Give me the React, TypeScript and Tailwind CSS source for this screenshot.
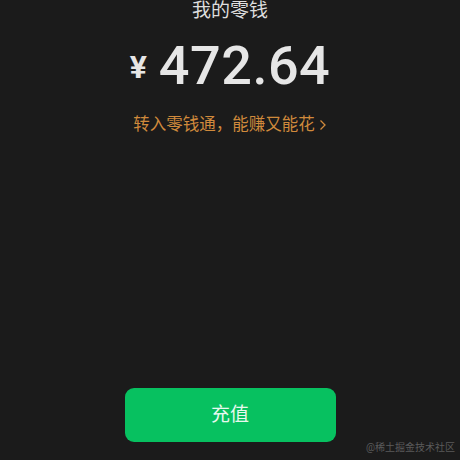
import React from "react";

const font = { fontFamily: '"Roboto", "Noto Sans CJK SC", sans-serif' };

export default function App() {
  return (
    <div
      className="relative w-[460px] h-[460px] overflow-hidden bg-[#1b1b1b] flex flex-col items-center"
      style={font}
    >
      <div className="mt-0 text-[19px] leading-[22px] text-[#dedede]">我的零钱</div>

      <div className="mt-[14px] flex items-center h-[60px] text-[#e6e6e6]">
        <span className="text-[32px] font-bold mr-[12px] mt-[2px]">¥</span>
        <span className="text-[54px] font-medium tracking-[0.5px] leading-none">472.64</span>
      </div>

      <div className="mt-[19px] flex items-center gap-[4px] text-[16.5px] leading-[20px] text-[#d08a3c]">
        <span>转入零钱通，能赚又能花</span>
        <svg width="8" height="12" viewBox="0 0 8 12" fill="none">
          <path d="M1.5 1.5 L6 6 L1.5 10.5" stroke="currentColor" strokeWidth="1.3" />
        </svg>
      </div>

      <div className="flex-1" />

      <button className="mb-[18px] w-[211px] h-[54px] rounded-[9px] bg-[#07c160] text-[19px] text-[#e8f8ee]">
        充值
      </button>

      <div className="absolute right-[5px] bottom-[6px] text-[10px] leading-[12px] text-[#5a5a5a]">
        @稀土掘金技术社区
      </div>
    </div>
  );
}
